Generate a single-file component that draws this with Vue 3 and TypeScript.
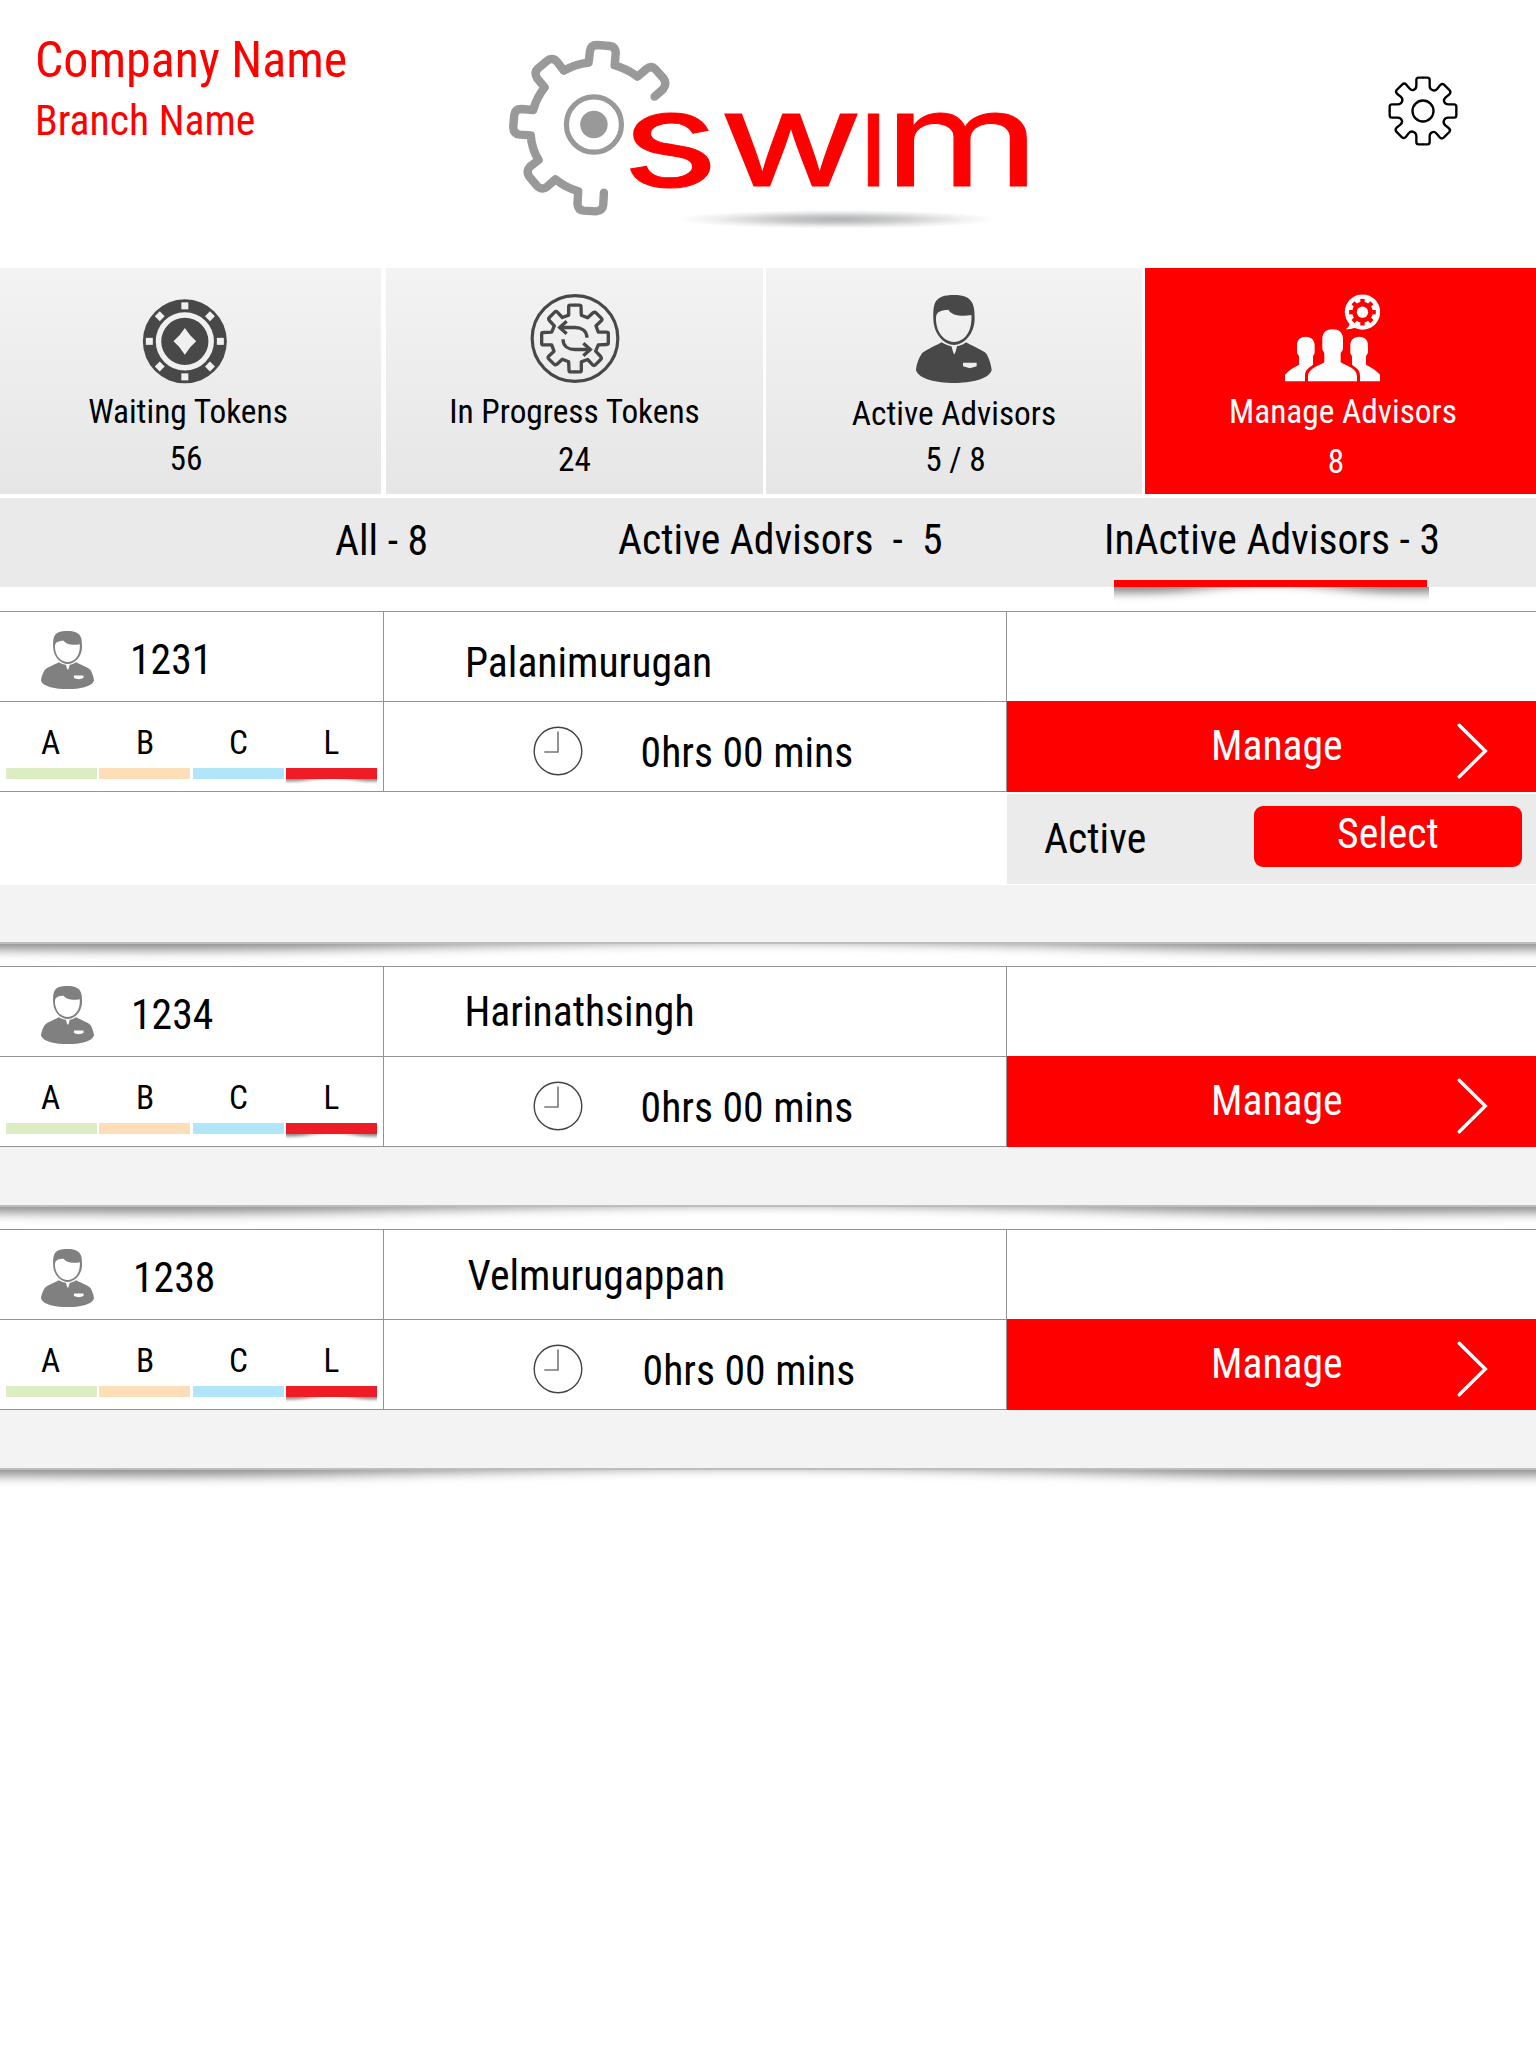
<script setup lang="ts">
interface Tile {
  key: 'waiting' | 'progress' | 'active' | 'manage'
  label: string
  count: string
}

interface Filter {
  key: string
  label: string
  selected?: boolean
}

interface Advisor {
  id: string
  name: string
  time: string
  open?: boolean
}

const tiles: Tile[] = [
  { key: 'waiting', label: 'Waiting Tokens', count: '56' },
  { key: 'progress', label: 'In Progress Tokens', count: '24' },
  { key: 'active', label: 'Active Advisors', count: '5 / 8' },
  { key: 'manage', label: 'Manage Advisors', count: '8' },
]

const filters: Filter[] = [
  { key: 'all', label: 'All - 8' },
  { key: 'on', label: 'Active Advisors  -  5' },
  { key: 'off', label: 'InActive Advisors - 3', selected: true },
]

const advisors: Advisor[] = [
  { id: '1231', name: 'Palanimurugan', time: '0hrs 00 mins', open: true },
  { id: '1234', name: 'Harinathsingh', time: '0hrs 00 mins' },
  { id: '1238', name: 'Velmurugappan', time: '0hrs 00 mins' },
]

const grades = ['A', 'B', 'C', 'L']
const eighths = [0, 45, 90, 135, 180, 225, 270, 315]
const quarters = [0, 90, 180, 270]

const personHead =
  'M101 100C101 55 103 30 163 30C222 30 225 62 225 100C225 148 192 180 163 180C134 180 101 148 101 100ZM109 100C108 78 128 75 146 74C156 91 185 96 215 90C218 128 203 169 163 171C123 169 108 128 109 100Z'
const personBody =
  'M126 172C96 188 76 196 66 206C56 220 49 244 49 256C60 284 110 294 163 294C215 294 265 284 276 256C276 244 268 218 260 206C250 196 228 188 199 172C190 180 179 182 172 184C170 190 168 205 164 208C160 205 158 190 155 184C146 182 136 179 126 172ZM190 233V244Q200 247 211 250Q221 247 231 244V233Z'
const sidePerson =
  'M1191 180C1191 162 1203 154 1217 154C1231 154 1244 162 1244 180V200C1244 208 1239 208 1239 214V238C1226 248 1215 254 1215 270V288H1155V268C1165 257 1180 246 1197 238V214C1197 208 1191 206 1191 200Z'
</script>

<template>
  <div class="page">
    <header class="top">
      <div class="company">
        <h1>Company Name</h1>
        <h2>Branch Name</h2>
      </div>

      <svg class="logo" viewBox="490 20 560 230" width="560" height="230">
        <defs>
          <radialGradient id="ground">
            <stop offset="0" stop-color="#b2b3b5" />
            <stop offset="0.35" stop-color="#c6c7c8" />
            <stop offset="0.75" stop-color="#eeeeee" />
            <stop offset="1" stop-color="#ffffff" />
          </radialGradient>
          <clipPath id="xheight">
            <rect x="600" y="112" width="450" height="78" />
          </clipPath>
        </defs>
        <ellipse cx="837" cy="219.3" rx="160" ry="9.5" fill="url(#ground)" />
        <g transform="translate(490 20) scale(.35714 .33333)" fill="none" stroke="#999" stroke-linecap="round" stroke-linejoin="round">
          <path
            stroke-width="8.4"
            vector-effect="non-scaling-stroke"
            d="M461 230L485 207Q497 190 485 174L465 150Q452 135 438 147L413 170Q384 147 349 136L352 100Q352 80 335 78L300 75Q282 75 280 93L276 128Q240 132 207 152L190 128Q175 108 158 124L134 146Q122 158 132 175L153 202Q130 233 121 270L88 267Q70 267 68 285L65 320Q65 342 84 344L114 346Q117 387 136 420L112 440Q100 453 110 470L132 498Q146 512 160 500L183 478Q212 503 247 514L245 552Q246 570 262 572L297 574Q316 572 317 555L319 518"
          />
          <ellipse cx="291" cy="313.5" rx="77" ry="83" stroke-width="5.2" vector-effect="non-scaling-stroke" />
          <ellipse cx="291" cy="313.5" rx="38.5" ry="41" fill="#999" stroke="none" />
        </g>
        <text class="wordmark" y="186.2" clip-path="url(#xheight)"><tspan x="621" textLength="98" lengthAdjust="spacingAndGlyphs">s</tspan><tspan x="719" textLength="144" lengthAdjust="spacingAndGlyphs">w</tspan><tspan class="stem" x="863.5" textLength="20" lengthAdjust="spacingAndGlyphs">i</tspan><tspan x="884" textLength="156" lengthAdjust="spacingAndGlyphs">m</tspan></text>
      </svg>

      <svg class="settings" viewBox="-105 -105 210 210" width="70" height="70" fill="none" stroke="#000" stroke-width="7">
        <path
          v-for="a in quarters"
          :key="a"
          :transform="`rotate(${a})`"
          d="M-1-100H13Q20-100 20-93V-76Q20-66 28-63Q36-59 43-67L51-77Q57-84 63-79L80-62Q85-56 79-50L68-41Q60-34 64-27Q67-20 76-20H93Q100-20 100-13V1"
        />
        <circle r="31.5" />
      </svg>
    </header>

    <nav class="tiles">
      <div v-for="t in tiles" :key="t.key" class="tile" :class="t.key">
        <div class="picture">
          <svg v-if="t.key === 'waiting'" viewBox="-127 -127 254 254" width="84.7" height="84.7">
            <circle r="126" fill="#484848" />
            <circle r="79" fill="none" stroke="#f0f0f0" stroke-width="16.5" />
            <rect v-for="a in eighths" :key="a" x="-10.5" y="-117" width="21" height="21" fill="#f0f0f0" :transform="`rotate(${a})`" />
            <path d="M0-40Q15-16 34 0Q15 16 0 40Q-15 16-34 0Q-15-16 0-40Z" fill="#f0f0f0" />
          </svg>
          <svg v-else-if="t.key === 'progress'" viewBox="-135 -135 270 270" width="90" height="90" fill="none" stroke="#484848">
            <circle r="128.5" stroke-width="9.5" />
            <path
              v-for="a in quarters"
              :key="a"
              :transform="`rotate(${a})`"
              stroke-width="10"
              stroke-linejoin="round"
              d="M-1-100H13Q18-100 18-95L19-70L38-62L54-77Q59-81 63-77L79-61Q83-57 79-53L63-38L70-19H95Q100-19 100-14V1"
            />
            <g v-for="a in [0, 180]" :key="a" :transform="`rotate(${a})`" stroke-width="10">
              <path d="M36-2C36-25 17-33 0-33H-46" />
              <path d="M-25-52L-46-33L-25-14" />
            </g>
          </svg>
          <svg v-else-if="t.key === 'active'" viewBox="49 30 227 264" width="75.7" height="88" fill="#484848" fill-rule="evenodd">
            <path :d="personHead" />
            <path :d="personBody" />
          </svg>
          <svg v-else viewBox="1155 27 286 261" width="95.3" height="87" fill="#fff">
            <path d="M1267 160C1267 140 1280 131 1298 131C1316 131 1329 140 1329 160V188C1329 198 1322 197 1322 206V230C1337 240 1371 247 1371 272V288H1224V272C1224 249 1258 240 1273 230V206C1273 197 1267 198 1267 188Z" />
            <path :d="sidePerson" />
            <path :d="sidePerson" transform="translate(2595 0) scale(-1 1)" />
            <circle cx="1387.5" cy="79.5" r="53" />
            <path d="M1350 110Q1349 124 1337 131Q1352 133 1366 126Z" />
            <g transform="translate(1387.5 80)">
              <circle r="31" fill="#f00" />
              <rect v-for="a in eighths" :key="a" x="-6.5" y="-40" width="13" height="16" fill="#f00" :transform="`rotate(${a})`" />
              <circle r="17" />
            </g>
          </svg>
        </div>
        <div class="label">{{ t.label }}</div>
        <div class="count">{{ t.count }}</div>
      </div>
    </nav>

    <nav class="filters">
      <div v-for="f in filters" :key="f.key" class="filter" :class="f.key">
        <span>{{ f.label }}</span>
        <div v-if="f.selected" class="underline">
          <svg class="curl" viewBox="0 0 100 20" preserveAspectRatio="none"><path d="M-9-20H109V7H90Q80 7 70 1Q50-7 30 1Q20 7 10 7H-9Z" /></svg>
        </div>
      </div>
    </nav>

    <main>
      <section v-for="a in advisors" :key="a.id" class="card" :class="'card-' + a.id">
        <div class="row">
          <div class="cell who">
            <svg viewBox="49 30 227 264" preserveAspectRatio="none" width="53" height="58" fill="#808080" fill-rule="evenodd">
              <path :d="personHead" />
              <path :d="personBody" />
            </svg>
            <span class="id">{{ a.id }}</span>
          </div>
          <div class="cell name"><span>{{ a.name }}</span></div>
          <div class="cell"></div>
        </div>
        <div class="row">
          <div class="cell grades">
            <div v-for="g in grades" :key="g" class="grade" :class="'g-' + g">
              <span>{{ g }}</span>
              <div class="bar">
                <svg v-if="g === 'L'" class="curl" viewBox="0 0 100 20" preserveAspectRatio="none"><path d="M-9-20H109V7H90Q80 7 70 0Q50-8 30 0Q20 7 10 7H-9Z" /></svg>
              </div>
            </div>
          </div>
          <div class="cell time">
            <svg width="50" height="50" viewBox="-25 -25 50 50" fill="none">
              <circle r="23.8" stroke="#444" stroke-width="1.4" />
              <path d="M0-19.5V1H-13.7" stroke="#777" stroke-width="1.6" />
            </svg>
            <span>{{ a.time }}</span>
          </div>
          <button class="manage-btn">
            <span>Manage</span>
            <svg width="34" height="60" viewBox="0 0 34 60" fill="none" stroke="#fff" stroke-width="3.4" stroke-linecap="round">
              <path d="M4.2 4.3L30.3 30L4.2 55.7" />
            </svg>
          </button>
        </div>
        <div v-if="a.open" class="panel">
          <div class="options">
            <span>Active</span>
            <button class="select">Select</button>
          </div>
        </div>
        <div class="strip"></div>
        <div class="under">
          <svg class="curl" viewBox="0 0 100 20" preserveAspectRatio="none"><path d="M-20-20H120V5H98Q88 7 80 6Q65-1 50-3Q35-1 20 5Q10 7 0 5H-20Z" /></svg>
        </div>
      </section>
    </main>
  </div>
</template>

<style>
body {
  margin: 0;
  background: #fff;
}
</style>

<style scoped>
.page {
  width: 1536px;
  min-height: 2048px;
  background: #fff;
  color: #000;
  font-family: 'Roboto Condensed', Roboto, sans-serif;
  font-stretch: 75%;
  font-size: 41.67px;
  line-height: 50px;
  overflow: hidden;
}
svg {
  display: block;
  flex: none;
}
button {
  border: 0;
  padding: 0;
  color: #fff;
  background: #f00;
  font: inherit;
}
.top {
  display: flex;
  height: 268px;
}
.company {
  width: 455px;
  padding: 30px 0 0 35px;
  color: #f00;
}
h1,
h2 {
  margin: 0;
  font-weight: 400;
}
h1 {
  font-size: 50px;
  line-height: 60px;
}
h2 {
  margin-top: 6px;
  font-size: 41.67px;
  line-height: 50px;
}
.logo {
  margin-top: 20px;
}
.wordmark {
  font-family: Inter, sans-serif;
  font-size: 132px;
  font-stretch: 100%;
  fill: #f00;
  stroke: #f00;
  stroke-width: 1px;
}
.stem {
  font-weight: 700;
}
.settings {
  margin: 76.3px 0 0 337.7px;
}

.tiles {
  display: grid;
  grid-template-columns: 386px 380px 379px 391px;
  height: 226px;
  font-size: 33.33px;
  line-height: 40px;
  text-align: center;
}
.tile {
  border-right: 3px solid #fff;
  background: linear-gradient(#f3f3f3, #e6e6e6);
}
.tile.waiting {
  border-right-width: 5px;
}
.tile.manage {
  border: 0;
  background: #f00;
  color: #fff;
}
.picture {
  display: flex;
  justify-content: center;
  align-items: flex-end;
  height: 115.5px;
  margin-bottom: 8px;
}
.count {
  margin-top: 8px;
}
.waiting .picture {
  transform: translate(-5.5px, 0);
}
.waiting .label {
  transform: translate(-2.5px, 0);
}
.waiting .count {
  transform: translate(-4.5px, -1px);
}
.progress .picture {
  transform: translate(0, -0.5px);
}
.active .picture {
  transform: translate(0, -1px);
}
.active .label {
  transform: translate(0, 2px);
}
.active .count {
  transform: translate(1.5px, 0);
}
.manage .picture {
  transform: translate(-8px, -2.5px);
}
.manage .label {
  transform: translate(2.5px, 0);
}
.manage .count {
  transform: translate(-4.5px, 2px);
}

.filters {
  display: flex;
  box-sizing: border-box;
  height: 89px;
  margin-top: 4px;
  padding: 17px 0 0 335px;
  background: #eaeaea;
  white-space: pre;
}
.all {
  width: 283px;
  padding-top: 1px;
}
.on {
  width: 486px;
}
.off span {
  display: block;
  height: 65px;
}
.underline {
  position: relative;
  width: 313px;
  height: 7px;
  margin-left: 10px;
  background: #f00;
}
.curl {
  overflow: hidden;
}
.curl path {
  fill: #8c8c8c;
  filter: blur(5px);
}
.underline .curl {
  position: absolute;
  top: 7px;
  left: 0;
  width: 315px;
  height: 18px;
}

main {
  padding-top: 24px;
}
.row {
  display: grid;
  grid-template-columns: 383px 623px 530px;
  height: 90px;
}
.cell {
  box-sizing: border-box;
  border-top: 1px solid #939393;
  border-right: 1px solid #939393;
}
.row .cell:first-child {
  width: 384px;
}
.row .cell:nth-child(2) {
  width: 624px;
  border-right: 0;
}
.row > :nth-child(3) {
  border-right: 0;
  border-left: 1px solid #939393;
}
.who {
  display: flex;
}
.who svg {
  margin: 19px 0 0 41px;
}
.id {
  margin: 23px 0 0 36px;
}
.card-1234 .id {
  margin-left: 37px;
}
.card-1238 .id {
  margin-left: 39px;
}
.name span {
  display: block;
  padding: 26px 0 0 82px;
}
.card-1234 .name span {
  padding: 20px 0 0 81.5px;
}
.card-1238 .name span {
  padding: 21px 0 0 84.5px;
}
.grades {
  display: grid;
  grid-template-columns: 93px 94px 93px 91px;
  padding-left: 6px;
  font-size: 33.33px;
  line-height: 40px;
}
.grade {
  width: 91px;
  padding-top: 21px;
  text-align: center;
}
.grade span {
  display: block;
  height: 45px;
}
.g-A span {
  padding-right: 2px;
}
.g-B span {
  padding-left: 1px;
}
.bar {
  position: relative;
  height: 11px;
  background: #dcedc4;
}
.g-B .bar {
  background: #fddeb9;
}
.g-C .bar {
  background: #b1e5fa;
}
.g-L .bar {
  background: #ee1c25;
}
.bar .curl {
  position: absolute;
  top: 11px;
  left: 0;
  width: 91px;
  height: 7px;
}
.time {
  display: flex;
}
.time svg {
  margin: 24.3px 0 0 150.4px;
}
.time span {
  margin: 26px 0 0 57.2px;
}
.card-1238 .time span {
  margin-left: 59.2px;
}
.manage-btn {
  display: flex;
  box-sizing: border-box;
  height: 91px;
  z-index: 1;
  text-align: left;
}
.manage-btn span {
  width: 244px;
  margin: 20px 0 0 204px;
}
.manage-btn svg {
  margin-top: 20px;
}
.panel {
  display: flex;
  box-sizing: border-box;
  height: 93px;
  margin-bottom: 1px;
  padding: 2px 0 0 1007px;
  border-top: 1px solid #939393;
}
.panel + .strip {
  border-top: 0;
  height: 57px;
}
.options {
  display: flex;
  width: 529px;
  height: 91px;
  margin-top: -1px;
  border-top: 1px solid #fff;
  box-sizing: border-box;
  background: #ebebeb;
}
.options span {
  width: 209.5px;
  margin: 20px 0 0 37px;
}
.select {
  width: 268px;
  height: 61px;
  margin-top: 12px;
  padding: 0 0 5px 1px;
  border-radius: 9px;
}
.strip {
  box-sizing: border-box;
  height: 59px;
  border-top: 1px solid #939393;
  background: #f3f3f3;
}
.under {
  height: 24px;
}
.under .curl {
  width: 1536px;
  height: 24px;
  border-top: 2px solid #bcbebd;
  box-sizing: border-box;
}
</style>
